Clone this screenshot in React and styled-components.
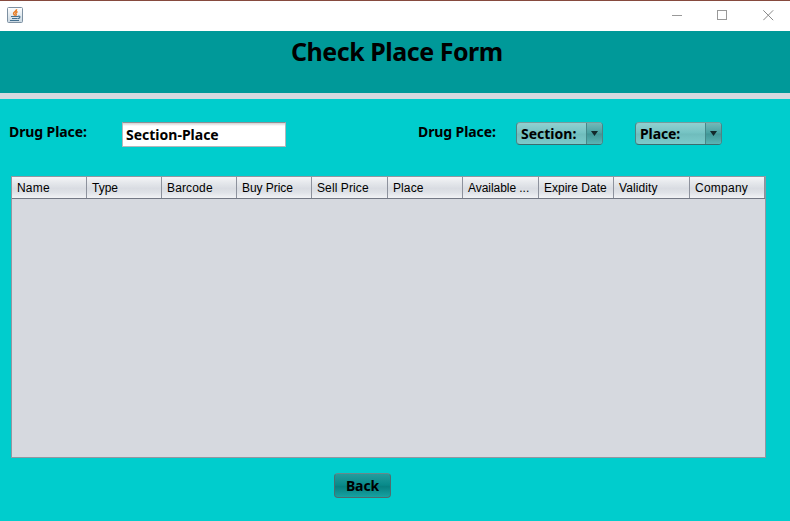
import React from "react";
import styled, { createGlobalStyle } from "styled-components";

const Global = createGlobalStyle`
  * { box-sizing: border-box; }
  body { margin: 0; background: #00cdcd; overflow: hidden; }
`;

const Window = styled.main`
  width: 790px;
  height: 521px;
  display: flex;
  flex-direction: column;
  background: #00cdcd;
  color: #000;
  font: bold 14px/18px "Noto Sans", "DejaVu Sans", sans-serif;
`;

const TitleBar = styled.header`
  height: 31px;
  flex: none;
  display: flex;
  justify-content: space-between;
  background: #fff;
  border-top: 1px solid #864a3e;
  padding: 6px 16px 0 7px;
`;

const Controls = styled.div`
  display: flex;
  gap: 35px;
  padding-top: 3px;
  svg { display: block; }
`;

const Banner = styled.section`
  height: 68px;
  flex: none;
  background: #009999;
  border-bottom: 6px solid #d6d9df;
  padding: 5px 0 0 291px;
`;

const Heading = styled.h1`
  margin: 0;
  font-size: 25px;
  line-height: 30px;
  letter-spacing: ${(p) => p.$tracking}px;
  white-space: nowrap;
`;

const Filters = styled.section`
  height: 77px;
  flex: none;
  display: flex;
  align-items: flex-start;
  padding: 23px 0 0 9px;
`;

const Label = styled.label`
  width: ${(p) => p.$width}px;
  padding-top: 1px;
  letter-spacing: ${(p) => p.$tracking}px;
  white-space: nowrap;
`;

const Field = styled.input`
  width: 164px;
  height: 25px;
  margin: 0 132px 0 0;
  padding: 0 3px;
  border: 1px solid #b4b7bb;
  border-top-color: #8d8f94;
  border-radius: 0;
  outline: 0;
  background: linear-gradient(#d0d0d0 0, #fff 3px);
  color: #000;
  font: inherit;
  letter-spacing: ${(p) => p.$tracking}px;
`;

const Combo = styled.button`
  width: ${(p) => p.$width}px;
  height: 23px;
  margin: 0 32px 0 0;
  padding: 0;
  display: flex;
  justify-content: space-between;
  overflow: hidden;
  border: 1px solid #4f8284;
  border-top-color: #759b9c;
  border-bottom-color: #3c6c6e;
  border-radius: 4px;
  background: linear-gradient(#91d0d0, #74c3c3 48%, #6fbcbc 52%, #7ccbcb);
  color: #000;
  font: inherit;
  letter-spacing: ${(p) => p.$tracking}px;
`;

const ComboText = styled.span`
  padding: 2px 0 0 4px;
`;

const ComboArrow = styled.span`
  width: 16px;
  height: 21px;
  display: grid;
  place-items: center;
  border-left: 1px solid #43898a;
  background: linear-gradient(#73b8b8, #49a1a1 48%, #419696 52%, #5bb4b4);
`;

const Table = styled.section`
  width: 755px;
  height: 282px;
  flex: none;
  margin-left: 11px;
  border: 1px solid #9297a1;
  background: #d6d9df;
`;

const HeaderRow = styled.div`
  height: 22px;
  display: grid;
  grid-template-columns: 75px 75px 75px 75px 76px 75px 76px 75px 76px 75px;
  border-bottom: 1px solid #747985;
  background: linear-gradient(#f4f5f7 0, #e4e7eb 30%, #d9dce2 55%, #e0e3e8 75%, #f2f3f5 100%);
`;

const HeaderCell = styled.div`
  padding: 3px 0 0 5px;
  border-right: 1px solid #8d929d;
  font: 12px/16px "Liberation Sans", Arial, sans-serif;
  letter-spacing: ${(p) => p.$tracking || 0}px;
  white-space: nowrap;
`;

const Footer = styled.footer`
  padding: 15px 0 0 334px;
`;

const BackButton = styled.button`
  display: block;
  width: 57px;
  height: 25px;
  padding: 0;
  border: 1px solid #4e6c6e;
  border-top-color: #67898b;
  border-radius: 4px;
  background: linear-gradient(#249c9c, #088a8a 48%, #078080 55%, #16a2a2);
  color: #000;
  font: inherit;
  line-height: 22px;
  letter-spacing: ${(p) => p.$tracking}px;
`;

const columns = [
  ["Name", 0.2], ["Type"], ["Barcode", 0.15], ["Buy Price", -0.05], ["Sell Price", 0.1],
  ["Place", 0.1], ["Available ...", -0.05], ["Expire Date"], ["Validity", 0.1], ["Company", 0.25],
];

const JavaIcon = () => (
  <svg width="16" height="16" viewBox="0 0 16 16">
    <defs>
      <linearGradient id="tile" x2="0" y2="1">
        <stop stopColor="#fff" />
        <stop offset="1" stopColor="#c9d7e1" />
      </linearGradient>
    </defs>
    <rect x=".5" y=".5" width="15" height="15" rx="1" fill="url(#tile)" stroke="#7e91a2" />
    <path d="M9.6 2.2C9.8 4.2 6.5 4.7 6.6 6.5C6.7 7.5 7.7 7.8 7.8 8.8M10.6 4.8C8.8 5.4 8.4 6.2 9.1 7.2C9.4 7.8 9 8.4 8.6 8.8" fill="none" stroke="#e87a20" strokeWidth="1.5" />
    <path d="M4 9.5H11M5 11.5H10.5M11 9.4C13.6 8.5 13.6 11 10.9 11.6M3 13.5H12" fill="none" stroke="#44708f" strokeWidth="1.2" />
  </svg>
);

const Arrow = () => (
  <svg width="7" height="5" viewBox="0 0 7 5"><path d="M0 0H7L3.5 5Z" fill="#12292b" /></svg>
);

export default function App() {
  return (
    <Window>
      <Global />
      <TitleBar>
        <JavaIcon />
        <Controls>
          <svg width="11" height="11"><path d="M1 5.5H11" stroke="#999" /></svg>
          <svg width="11" height="11"><rect x=".5" y=".5" width="9" height="9" fill="none" stroke="#999" /></svg>
          <svg width="11" height="11"><path d="M.3 .3L10.2 10.2M10.2 .3L.3 10.2" stroke="#888" /></svg>
        </Controls>
      </TitleBar>
      <Banner><Heading $tracking={-0.48}>Check Place Form</Heading></Banner>
      <Filters>
        <Label $width={113} $tracking={-0.1}>Drug Place:</Label>
        <Field $tracking={0} defaultValue="Section-Place" aria-label="Drug place" />
        <Label $width={98} $tracking={-0.1}>Drug Place:</Label>
        <Combo $width={87} $tracking={0}><ComboText>Section:</ComboText><ComboArrow><Arrow /></ComboArrow></Combo>
        <Combo $width={87} $tracking={-0.1}><ComboText>Place:</ComboText><ComboArrow><Arrow /></ComboArrow></Combo>
      </Filters>
      <Table>
        <HeaderRow>
          {columns.map(([name, tracking]) => (
            <HeaderCell key={name} $tracking={tracking}>{name}</HeaderCell>
          ))}
        </HeaderRow>
      </Table>
      <Footer><BackButton $tracking={-0.1}>Back</BackButton></Footer>
    </Window>
  );
}
